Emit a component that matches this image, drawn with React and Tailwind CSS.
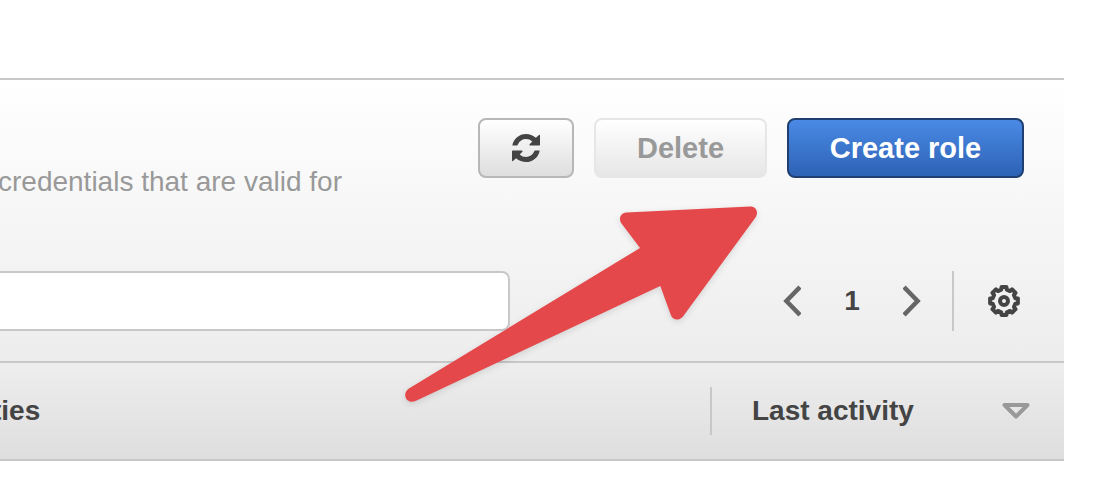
import React from "react";

function RefreshIcon() {
  return (
    <svg width="28" height="28" viewBox="0 0 28 28" aria-hidden="true" fill="#444">
      <g id="refresh-half">
        <path d="M0.3 11.6 C1.4 4.8 7.2 0 14 0 C17.6 0 21 1.3 23.9 3.8 L27 1 Q28 0.4 28 1.600 V10.8 Q28 11.6 27.2 11.600 H18.2 Q16.800 11.400 17.600 10.300 L20.300 7.500 C18.600 5.800 16.500 5 14 5 C10.400 5 7.400 7 6 10.200 Q5.600 11.600 4.800 11.600 Z" />
      </g>
      <use href="#refresh-half" transform="rotate(180 14 14)" />
    </svg>
  );
}

function gearOutline() {
  const points = [];
  for (let tooth = 0; tooth < 8; tooth++) {
    [
      [-14, 11.6],
      [-10, 14.1],
      [10, 14.1],
      [14, 11.6],
    ].forEach(([offset, radius]) => {
      const angle = ((tooth * 45 + offset) * Math.PI) / 180;
      points.push(
        `${(16 + radius * Math.sin(angle)).toFixed(2)},${(16 - radius * Math.cos(angle)).toFixed(2)}`
      );
    });
  }
  return points.join(" ");
}

function GearIcon() {
  return (
    <svg width="32" height="32" viewBox="0 0 32 32" fill="none" stroke="#444" aria-hidden="true">
      <polygon points={gearOutline()} strokeWidth="4" strokeLinejoin="round" />
      <circle cx="16" cy="16" r="4" strokeWidth="4" />
    </svg>
  );
}

function Chevron({ d }) {
  return (
    <svg width="18" height="32" viewBox="0 0 18 32" fill="none" stroke="#666" strokeWidth="4.5" aria-hidden="true">
      <path d={d} />
    </svg>
  );
}

function PointerArrow() {
  return (
    <svg
      className="pointer-events-none absolute top-[190px] right-[324px] drop-shadow-[0_2px_3px_rgba(0,0,0,0.12)]"
      width="380"
      height="220"
      viewBox="390 190 380 220"
      aria-hidden="true"
    >
      <path
        fill="#e5484b"
        d="M408.5 388.8 L640 248 L621.5 223.5 C618 218.5 621 212.6 626.5 212.4 L750 206.6 C756 206.4 759 212 755.5 217.5 L683 316.5 C679.5 321 673 320.5 671 315.5 L660.3 286 L415.5 401 C406.5 404.8 401.5 394 408.5 388.8 Z"
      />
    </svg>
  );
}

export default function App() {
  return (
    <div className="relative overflow-hidden bg-white pt-[78px] pr-[30px] font-['Liberation_Sans',Arial,sans-serif] text-[28px] leading-9 text-[#444]">
      <main className="border-y-2 border-[#c8c8c8]">
        <section className="bg-linear-to-b from-white to-[#ededed] pt-[38px] pb-[30px]">
          <div className="flex items-start gap-5 pr-10">
            <p className="-ml-0.5 flex-1 pt-[46px] whitespace-nowrap text-[#999]">credentials that are valid for</p>
            <button
              aria-label="Refresh"
              className="flex h-[60px] w-24 items-center justify-center rounded-lg border-2 border-[#b7b7b7] bg-linear-to-b from-white to-[#dedede]"
            >
              <RefreshIcon />
            </button>
            <button
              disabled
              className="h-[60px] min-w-[173px] rounded-lg border-2 border-[#e6e6e6] bg-linear-to-b from-white to-[#e6e6e6] px-9 text-[29px] font-bold text-[#999]"
            >
              Delete
            </button>
            <button className="h-[60px] min-w-[237px] rounded-lg border-2 border-[#1f3f70] bg-linear-to-b from-[#4a8ae6] to-[#2e63b5] px-9 text-[29px] font-bold text-white">
              Create role
            </button>
          </div>
          <div className="mt-[71px] flex h-[60px] items-center pr-11">
            <input
              type="search"
              aria-label="Search"
              className="h-full min-w-0 flex-1 rounded-r-lg border-2 border-l-0 border-[#c8c8c8] bg-white px-4 outline-none"
            />
            <nav className="ml-[273px] flex items-center" aria-label="Pages">
              <button aria-label="Previous page">
                <Chevron d="M17 2 L3.4 16 L17 30" />
              </button>
              <span className="w-[102px] text-center font-bold">1</span>
              <button aria-label="Next page">
                <Chevron d="M1 2 L14.6 16 L1 30" />
              </button>
            </nav>
            <div className="ml-[31px] flex h-full items-center border-l-2 border-[#c8c8c8] pl-[34px]">
              <button aria-label="Settings">
                <GearIcon />
              </button>
            </div>
          </div>
        </section>
        <table className="w-full table-fixed border-separate border-spacing-0 border-t-2 border-[#c8c8c8] bg-linear-to-b from-[#eee] to-[#dedede] text-left">
          <thead>
            <tr className="h-24">
              <th className="p-0">
                <span className="-ml-2 block">ties</span>
              </th>
              <th className="w-[354px] p-0">
                <button className="flex h-12 w-full items-center justify-between border-l-2 border-[#c8c8c8] pr-[34px] pl-10 font-bold">
                  Last activity
                  <svg width="28" height="16" viewBox="0 0 28 16" fill="none" stroke="#999" strokeWidth="4" strokeLinejoin="round" aria-hidden="true">
                    <path d="M2.5 2 H25.500 L14 13.500 Z" />
                  </svg>
                </button>
              </th>
            </tr>
          </thead>
        </table>
      </main>
      <PointerArrow />
    </div>
  );
}
